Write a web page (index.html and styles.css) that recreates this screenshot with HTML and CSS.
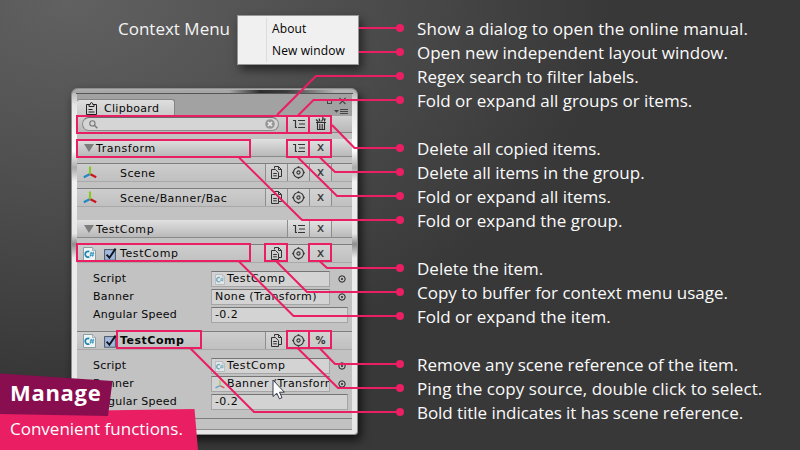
FILE: index.html
```
<!DOCTYPE html>
<html lang="en">
<head>
<meta charset="utf-8">
<title>Clipboard – Manage</title>
<link rel="stylesheet" href="styles.css">
</head>
<body>
<svg class="defs" width="0" height="0">
  <defs>
    <symbol id="fold" viewBox="0 0 14 12"><path d="M1 2.5H3.5V9.500H5M6 2.500H13M7 6H13M6 9.500H13" fill="none" stroke="#333" stroke-width="1.2"/></symbol>
    <symbol id="copy" viewBox="0 0 11 13"><path d="M3.500 2.500V.5H7.500L10.500 3.500V10.500H7.500M7.500 .5V3.500H10.500M.5 3.500H4.500L7.500 6.500V12.500H.5Z" fill="none" stroke="#333"/><path d="M2.200 7.500H5.800M2.200 9.800H5.800" stroke="#333"/></symbol>
    <symbol id="ping" viewBox="0 0 13 13"><circle cx="6.5" cy="6.5" r="5" fill="none" stroke="#333" stroke-width="1.1"/><circle cx="6.5" cy="6.5" r="1.600" fill="none" stroke="#333" stroke-width="1.1"/><path d="M6.5 .2V2M6.5 11V12.800M.2 6.5H2M11 6.5H12.800" stroke="#333" stroke-width="1.600"/></symbol>
    <symbol id="axes" viewBox="0 0 14 13"><path d="M7 8L.8 11.2" stroke="#1e88c8" stroke-width="2.1"/><path d="M7 8L13.200 11.2" stroke="#c9141c" stroke-width="2.1"/><path d="M7 .5V8.400" stroke="#86c81e" stroke-width="2.1"/></symbol>
    <symbol id="cs" viewBox="0 0 13 14"><path d="M.5 .5H9.5L12.5 3.5V13.5H.5Z" fill="#f1f4f5" stroke="#8c9da3"/><path d="M9.5 .5V3.5H12.5" fill="#cfd8dc" stroke="#8c9da3" stroke-width=".7"/><path d="M6.3 4.6A2.9 2.9 0 1 0 6.3 9.9" fill="none" stroke="#1b86b0" stroke-width="1.7"/><path d="M8.3 4.8L7.5 9.6M10.4 4.8L9.6 9.6M6.9 6.2H11.2M6.6 8.2H10.9" stroke="#1b86b0" stroke-width=".8"/></symbol>
    <symbol id="picker" viewBox="0 0 8 8"><circle cx="4" cy="4" r="3.2" fill="none" stroke="#222" stroke-width="1"/><circle cx="4" cy="4" r="1" fill="#222"/></symbol>
    <symbol id="tri" viewBox="0 0 10 8"><path d="M0 0H10L5 8Z" fill="#7d7d7d"/></symbol>
    <symbol id="check" viewBox="0 0 13 14"><rect x=".6" y="2.6" width="10.8" height="10.6" fill="#a3b9de" stroke="#4c5768"/><path d="M2.6 7.6L5.4 10.8L11.6 1.6" fill="none" stroke="#10151f" stroke-width="1.9"/></symbol>
  </defs>
</svg>

<main class="stage">
  <header class="context">
    <span class="context-label">Context Menu</span>
    <div class="menu">
      <div class="menu-item">About</div>
      <div class="menu-item">New window</div>
    </div>
  </header>

  <section class="window">
    <div class="titlebar">
      <div class="tab">
        <svg width="11" height="13" viewBox="0 0 11 13"><path d="M3 2.5H.5V12.500H10.500V2.500H8M3 4.500V2.500H4.200Q4.200 .6 5.500 .6T6.800 2.500H8V4.500ZM2.500 7.500H6.500M2.500 10H8.500" fill="none" stroke="#222"/></svg>
        <span>Clipboard</span>
      </div>
      <svg class="win-buttons" width="26" height="20" viewBox="0 0 26 20"><rect x="3.5" y="3.5" width="4" height="4" fill="none" stroke="#444"/><path d="M15.5 2L21.5 8M21.5 2L15.5 8" stroke="#444" stroke-width="1.1"/><path d="M10 14H15L12.5 16.800Z" fill="#444"/><path d="M16 13.500H24M16 15.500H24M16 17.500H24" stroke="#444"/></svg>
    </div>

    <div class="toolbar">
      <div class="search">
        <svg width="9" height="9" viewBox="0 0 9 9"><circle cx="3.4" cy="3.4" r="2.6" fill="none" stroke="#777" stroke-width="1.1"/><path d="M5.3 5.3L8.3 8.3" stroke="#777" stroke-width="1.4"/></svg>
        <svg width="10" height="10" viewBox="0 0 10 10"><circle cx="5" cy="5" r="4.8" fill="#989898"/><path d="M3 3L7 7M7 3L3 7" stroke="#eee" stroke-width="1.5"/></svg>
      </div>
      <div class="btn"><svg width="14" height="12"><use href="#fold"/></svg></div>
      <div class="btn last"><svg width="12" height="14" viewBox="0 0 12 14"><path d="M2.500 6V12.500H9.500V6M4.800 7V12M7.200 7V12M1 5.500H11" fill="none" stroke="#2c2c2c" stroke-width="1.1"/><path d="M1 2.500L3.500 4.800M4 1.500L5 4.500M6.500 4.500L8 2H10L9.300 4.500M7 .8H8.500" fill="none" stroke="#2c2c2c" stroke-width="1.2"/></svg></div>
    </div>

    <div class="row group first">
      <svg width="10" height="8"><use href="#tri"/></svg>
      <span class="label">Transform</span>
      <div class="btn"><svg width="14" height="12"><use href="#fold"/></svg></div>
      <div class="btn last x">x</div>
    </div>

    <div class="row item">
      <svg class="lead" width="14" height="13"><use href="#axes"/></svg>
      <span class="label">Scene</span>
      <div class="btn"><svg width="11" height="13"><use href="#copy"/></svg></div>
      <div class="btn"><svg width="13" height="13"><use href="#ping"/></svg></div>
      <div class="btn last x">x</div>
    </div>
    <div class="row item second">
      <svg class="lead" width="14" height="13"><use href="#axes"/></svg>
      <span class="label">Scene/Banner/Bac</span>
      <div class="btn"><svg width="11" height="13"><use href="#copy"/></svg></div>
      <div class="btn"><svg width="13" height="13"><use href="#ping"/></svg></div>
      <div class="btn last x">x</div>
    </div>

    <div class="row group">
      <svg width="10" height="8"><use href="#tri"/></svg>
      <span class="label">TestComp</span>
      <div class="btn"><svg width="14" height="12"><use href="#fold"/></svg></div>
      <div class="btn last x">x</div>
    </div>

    <div class="row item">
      <svg class="lead" width="13" height="14"><use href="#cs"/></svg>
      <svg class="check" width="13" height="14"><use href="#check"/></svg>
      <span class="label comp">TestComp</span>
      <div class="btn"><svg width="11" height="13"><use href="#copy"/></svg></div>
      <div class="btn"><svg width="13" height="13"><use href="#ping"/></svg></div>
      <div class="btn last x">x</div>
    </div>
    <div class="fields">
      <div class="field"><span class="name">Script</span><div class="value"><svg class="faded" width="10" height="11"><use href="#cs"/></svg><span class="comp">TestComp</span></div><svg width="8" height="8"><use href="#picker"/></svg></div>
      <div class="field"><span class="name">Banner</span><div class="value">None (Transform)</div><svg width="8" height="8"><use href="#picker"/></svg></div>
      <div class="field"><span class="name">Angular Speed</span><div class="value wide">-0.2</div></div>
    </div>

    <div class="row item third">
      <svg class="lead" width="13" height="14"><use href="#cs"/></svg>
      <svg class="check" width="13" height="14"><use href="#check"/></svg>
      <span class="label bold">TestComp</span>
      <div class="btn"><svg width="11" height="13"><use href="#copy"/></svg></div>
      <div class="btn"><svg width="13" height="13"><use href="#ping"/></svg></div>
      <div class="btn last pct">%</div>
    </div>
    <div class="fields">
      <div class="field"><span class="name">Script</span><div class="value"><svg class="faded" width="10" height="11"><use href="#cs"/></svg><span class="comp">TestComp</span></div><svg width="8" height="8"><use href="#picker"/></svg></div>
      <div class="field"><span class="name">Banner</span><div class="value"><svg class="faded" width="10" height="11"><use href="#axes"/></svg><span>Banner (Transform)</span></div><svg width="8" height="8"><use href="#picker"/></svg></div>
      <div class="field"><span class="name">Angular Speed</span><div class="value wide">-0.2</div></div>
    </div>
    <div class="footer"></div>
  </section>

  <svg class="overlay" width="800" height="450" viewBox="0 0 800 450">
    <g fill="none" stroke="#e91e63" stroke-width="2">
      <path d="M400 28H359M400 52H359M400 76H316L277 115M400 100H313.5L298 115.5M400 148H354.5L332 125M400 172H335L320 157.5M400 196H337L298 157.5M400 220H302L239 157.5M400 268H327L320 261.5M400 292H307L276.500 261.500M400 316H293.500L239 261.500M400 364H335L320 348.500M400 388H338L298 348.500M400 412H254L190.500 348.500"/>
      <path d="M77 116H331V133H77ZM287 116V133M309 116V133M77 140H250V157H77ZM287 140H331V157H287ZM309 140V157M77 244H250V261H77ZM265 244H287V261H265ZM309 244H331V261H309ZM117 331H201V348H117ZM287 331H331V348H287ZM309 331V348"/>
    </g>
    <g fill="#e91e63">
      <circle cx="400" cy="28" r="4"/><circle cx="400" cy="52" r="4"/><circle cx="400" cy="76" r="4"/><circle cx="400" cy="100" r="4"/>
      <circle cx="400" cy="148" r="4"/><circle cx="400" cy="172" r="4"/><circle cx="400" cy="196" r="4"/><circle cx="400" cy="220" r="4"/>
      <circle cx="400" cy="268" r="4"/><circle cx="400" cy="292" r="4"/><circle cx="400" cy="316" r="4"/>
      <circle cx="400" cy="364" r="4"/><circle cx="400" cy="388" r="4"/><circle cx="400" cy="412" r="4"/>
    </g>
    <path d="M273 380V396.500L276.800 393.200L279.400 398.800L282 397.600L279.500 392.200H284.300Z" fill="#fff" stroke="#22283c" stroke-width=".9"/>
  </svg>

  <div class="notes">
    <ul>
      <li class="loose">Show a dialog to open the online manual.</li>
      <li>Open new independent layout window.</li>
      <li>Regex search to filter labels.</li>
      <li>Fold or expand all groups or items.</li>
    </ul>
    <ul>
      <li>Delete all copied items.</li>
      <li>Delete all items in the group.</li>
      <li>Fold or expand all items.</li>
      <li>Fold or expand the group.</li>
    </ul>
    <ul>
      <li>Delete the item.</li>
      <li>Copy to buffer for context menu usage.</li>
      <li>Fold or expand the item.</li>
    </ul>
    <ul>
      <li class="tight">Remove any scene reference of the item.</li>
      <li class="loose">Ping the copy source, double click to select.</li>
      <li class="tight">Bold title indicates it has scene reference.</li>
    </ul>
  </div>

  <div class="badge">
    <div class="badge-title">Manage</div>
    <div class="badge-text">Convenient functions.</div>
  </div>
</main>
</body>
</html>
```
FILE: styles.css
```
* { box-sizing: border-box; }
body { margin: 0; }
svg { display: block; flex: none; }
.defs { position: absolute; }

.stage {
  position: relative;
  width: 800px;
  height: 450px;
  overflow: hidden;
  background: radial-gradient(ellipse 540px 375px at 70px 0, #616161 0%, #4c4c4c 55%, #383838 100%);
  font-family: "Open Sans", "Noto Sans", sans-serif;
  color: #fff;
}

/* Context menu */
.context { position: absolute; left: 118px; top: 15px; display: flex; }
.context-label { width: 119px; padding-top: 2px; font-size: 17px; line-height: 24px; color: #f4f4f4; }
.menu {
  width: 122px;
  height: 50px;
  padding: 2px 2px 2px 34px;
  border: 1px solid #979797;
  background: linear-gradient(#dcdcdc, #dcdcdc) 28px 2px / 1px 44px no-repeat, #f0f0f0;
  box-shadow: 3px 5px 9px rgba(0, 0, 0, .55);
  color: #000;
  font-size: 12px;
  letter-spacing: .12px;
}
.menu-item { height: 22px; line-height: 22px; }

/* Editor window */
.window {
  position: absolute;
  left: 71px;
  top: 88px;
  width: 287px;
  height: 347px;
  padding: 6px;
  border-radius: 7px 7px 4px 4px;
  background:
    linear-gradient(#555, #555) 5px 5px / 277px 1px no-repeat,
    linear-gradient(90deg, #a9a9a9, #a6a6a6 55%, #2d2d2d 66%, #3b3b3b 75%, #b4b4b4 92%) 0 2px / 287px 3px no-repeat,
    linear-gradient(#aaa, #e6e6e6 5%, #fff 18%, #aaa 23%, #f2f2f2 27%, #e6e6e6 42%, #8e8e8e 45%, #ececec 49%, #e6e6e6);
  box-shadow: inset 0 0 0 1px #8e8e8e, 3px 5px 10px rgba(0, 0, 0, .7);
  color: #080808;
  font: 11px/16px "DejaVu Sans", sans-serif;
  letter-spacing: .4px;
}
.titlebar {
  display: flex;
  justify-content: space-between;
  align-items: flex-end;
  height: 22px;
  background: #a2a2a2;
}
.tab {
  display: flex;
  align-items: center;
  gap: 7px;
  width: 98px;
  height: 17px;
  padding-left: 9px;
  border: 1px solid #848484;
  border-left: 0;
  border-bottom: 0;
  border-radius: 3px 3px 0 0;
  background: linear-gradient(#dedede, #cacaca);
  letter-spacing: .3px;
}
.tab span { padding-top: 1px; }
.win-buttons { margin: 0 2px 0 0; }
.toolbar {
  display: flex;
  height: 17px;
  padding: 0 20px 0 5px;
  border-bottom: 1px solid #848484;
  background: linear-gradient(#d0d0d0, #b8b8b8);
}
.search {
  flex: 1;
  display: flex;
  align-items: center;
  justify-content: space-between;
  height: 14px;
  margin: 1px 8px 0 0;
  padding: 0 3px 0 6px;
  border: 1px solid #8b8b8b;
  border-top-color: #696969;
  border-radius: 8px;
  background: #d5d5d5;
}
.btn {
  display: flex;
  align-items: center;
  justify-content: center;
  width: 22px;
  height: 100%;
  flex: none;
  border-left: 1px solid #8d8d8d;
  color: #333;
  background: rgba(255, 255, 255, .12);
}
.btn.last { width: 23px; border-right: 1px solid #8d8d8d; }
.x { font-size: 12px; line-height: 15px; letter-spacing: 0; -webkit-text-stroke: .2px #333; }
.pct { font-size: 10px; font-weight: bold; letter-spacing: 0; }

.window, .fields, .footer { background-color: #c2c2c2; }
.row {
  display: flex;
  align-items: center;
  height: 18px;
  padding-right: 20px;
}
.row .label { flex: 1; white-space: nowrap; }
.group {
  box-shadow: 0 -13px 0 #c2c2c2, 0 6px 0 #c2c2c2;
  margin: 13px 0 6px;
  padding-left: 7px;
  border-bottom: 1px solid #8a8a8a;
  background: linear-gradient(#e0e0e0, #b9b9b9);
}
.group.first { margin-top: 6px; box-shadow: 0 -6px 0 #c2c2c2, 0 6px 0 #c2c2c2; }
.group .label { padding: 2px 0 0 2px; letter-spacing: .55px; }
.item {
  height: 19px;
  padding-left: 6px;
  border-top: 1px solid #7e7e7e;
  border-bottom: 1px solid #a9a9a9;
  background: linear-gradient(#cdcdcd, #c0c0c0);
}
.item.second { margin-top: 6px; box-shadow: 0 -6px 0 #c2c2c2; }
.item .label { padding-top: 1px; }
.item .lead + .label { padding: 2px 0 0 23px; }
.check { margin: 0 3px 0 8px; }
.comp { letter-spacing: .6px; }
.bold { font-weight: bold; letter-spacing: .5px; }

.fields { display: flex; flex-direction: column; gap: 2px; padding: 8px 4px 8px 16px; }
.field { display: flex; align-items: center; height: 16px; gap: 8px; }
.name { width: 110px; flex: none; letter-spacing: .25px; }
.value {
  display: flex;
  align-items: center;
  gap: 2px;
  width: 119px;
  height: 16px;
  padding-left: 3px;
  overflow: hidden;
  white-space: nowrap;
  border: 1px solid #a5a5a5;
  border-top-color: #757575;
  background: #d3d3d3;
}
.value.wide { width: 137px; }
.faded { opacity: .6; }
.footer { height: 12px; border-top: 1px solid #7e7e7e; border-bottom: 1px solid #8e8e8e; }

.overlay { position: absolute; left: 0; top: 0; }

/* Feature notes */
.notes {
  position: absolute;
  left: 417px;
  top: 17px;
  display: flex;
  flex-direction: column;
  gap: 24px;
  font-size: 17px;
  line-height: 24px;
  color: #fafafa;
  white-space: nowrap;
}
.notes ul { margin: 0; padding: 0; list-style: none; }
.notes .loose { letter-spacing: .08px; }
.notes .tight { letter-spacing: -.05px; }

/* Corner badge */
.badge { position: absolute; left: 0; top: 373px; width: 198px; height: 77px; }
.badge-title {
  position: relative;
  z-index: 1;
  width: 113px;
  height: 43px;
  padding: 3px 0 0 10px;
  background: #880e4f;
  clip-path: polygon(0 .5px, 112.500px 8px, 108px 43px, 0 41px);
  font-size: 22px;
  font-weight: bold;
  line-height: 33px;
  letter-spacing: .7px;
}
.badge-text {
  height: 41px;
  margin-top: -7px;
  padding: 8px 0 0 10px;
  background: #e91e63;
  clip-path: polygon(0 3px, 194.500px 0, 198px 41px, 0 41px);
  font-size: 17px;
  line-height: 24px;
}
```
